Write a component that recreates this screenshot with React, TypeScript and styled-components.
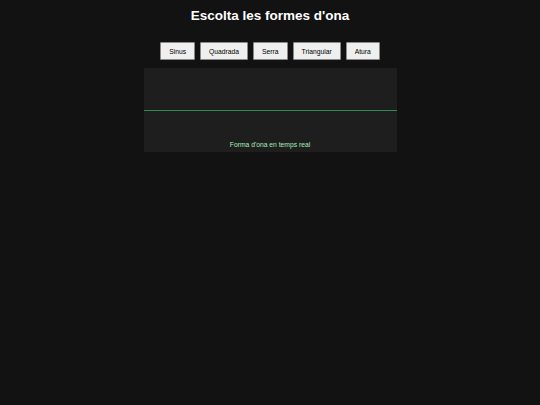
import React, { useState } from "react";
import styled, { createGlobalStyle } from "styled-components";

const GlobalStyle = createGlobalStyle`
  html, body {
    margin: 0;
    padding: 0;
    background: #121212;
    font-family: "Liberation Sans", Arial, sans-serif;
  }
`;

const WAVES = ["Sinus", "Quadrada", "Serra", "Triangular", "Atura"];

const Page = styled.div`
  display: flex;
  flex-direction: column;
  align-items: center;
  min-height: 405px;
  padding-top: 8px;
  box-sizing: border-box;
`;

const Title = styled.h1`
  margin: 0;
  font-size: 13.5px;
  line-height: 16px;
  font-weight: 700;
  color: #ffffff;
`;

const Controls = styled.div`
  display: flex;
  gap: 5px;
  margin-top: 18px;
`;

const WaveButton = styled.button<{ $active?: boolean }>`
  height: 18px;
  padding: 0 8px;
  font-family: "Liberation Sans", Arial, sans-serif;
  font-size: 6.75px;
  color: #000000;
  background: ${(p) => (p.$active ? "#dcdcdc" : "#efefef")};
  border: 1px solid #8a8a8a;
  border-radius: 1px;
  cursor: pointer;
`;

const Scope = styled.div`
  position: relative;
  width: 253px;
  height: 84px;
  margin-top: 8px;
  background: #1e1e1e;
`;

const Trace = styled.svg`
  display: block;
  width: 100%;
  height: 100%;
`;

const Caption = styled.span`
  position: absolute;
  left: 0;
  right: 0;
  bottom: 4px;
  text-align: center;
  font-size: 6.75px;
  color: #a6ecb8;
`;

export default function App() {
  const [wave, setWave] = useState<string | null>(null);

  return (
    <>
      <GlobalStyle />
      <Page>
        <Title>Escolta les formes d'ona</Title>
        <Controls>
          {WAVES.map((w) => (
            <WaveButton key={w} $active={wave === w} onClick={() => setWave(w === "Atura" ? null : w)}>
              {w}
            </WaveButton>
          ))}
        </Controls>
        <Scope>
          <Trace viewBox="0 0 253 84" preserveAspectRatio="none">
            <line x1="0" y1="42.5" x2="253" y2="42.5" stroke="#2f8a50" strokeWidth="1" />
          </Trace>
          <Caption>Forma d'ona en temps real</Caption>
        </Scope>
      </Page>
    </>
  );
}
